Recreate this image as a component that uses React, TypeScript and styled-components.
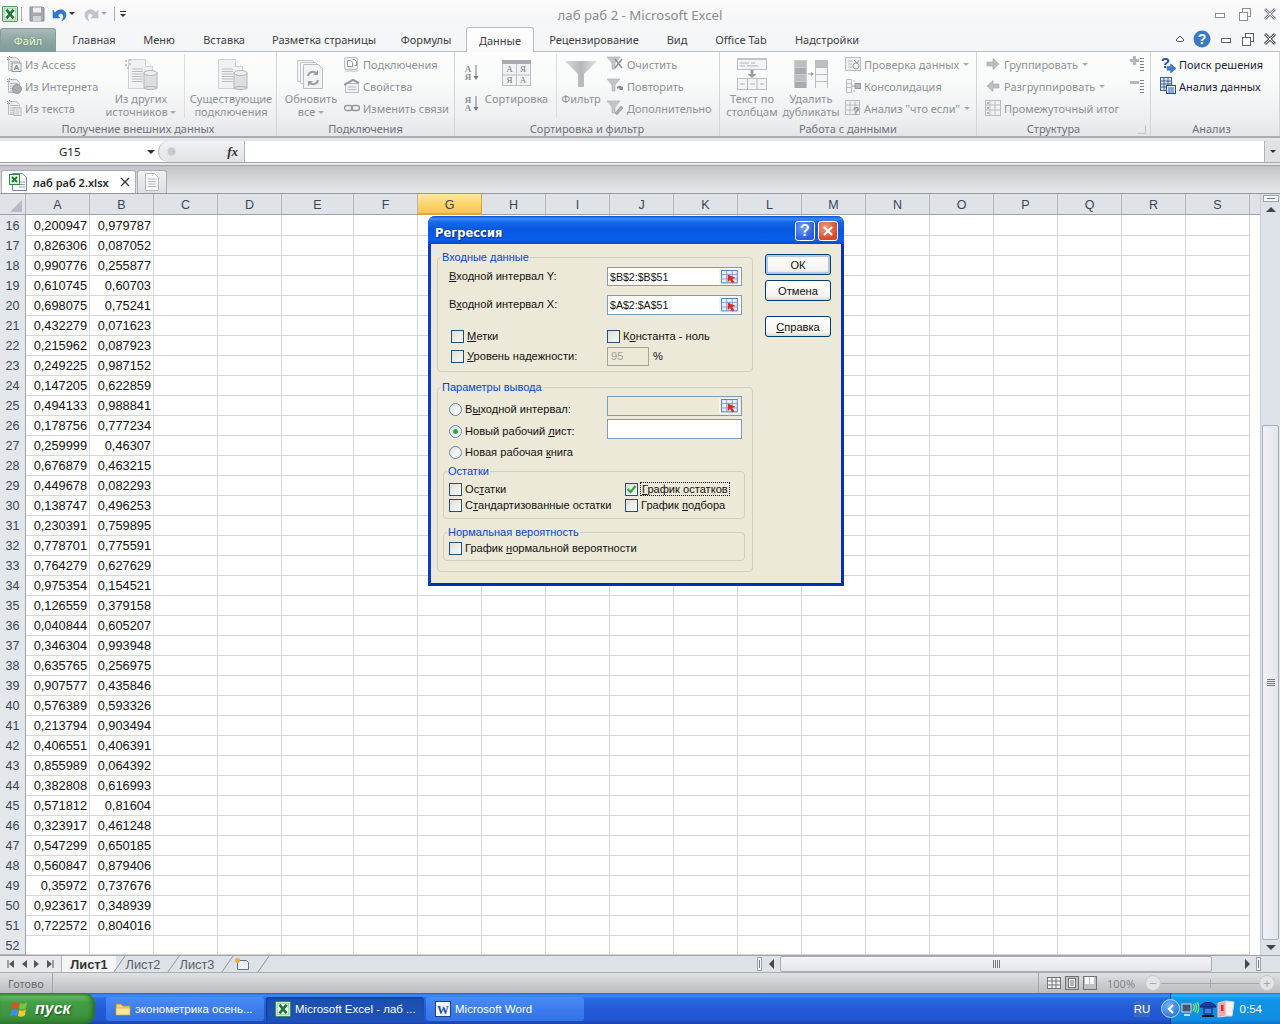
import * as React from 'react'
import styled, { createGlobalStyle } from 'styled-components'

const GlobalStyle = createGlobalStyle`
  html, body { margin: 0; padding: 0; background: #fff; }
  body { font-family: "Noto Sans", "Liberation Sans", sans-serif; }
  * { box-sizing: border-box; }
`

const Page = styled.div`
  position: relative;
  width: 1280px;
  height: 1024px;
  overflow: hidden;
  display: flex;
  flex-direction: column;
`

const Glyph = styled.svg`
  display: block;
  flex: none;
`

/* ---------- title bar ---------- */
const TitleBar = styled.div`
  height: 27px;
  display: grid;
  grid-template-columns: 1fr auto 1fr;
  align-items: center;
  background: linear-gradient(#fbfbfc, #f5f6f8);
`
const Qat = styled.div`
  display: flex;
  align-items: center;
  padding-left: 2px;
`
const QatSep = styled.div<{ $ml: number; $mr: number }>`
  width: 1px;
  height: 14px;
  margin: 0 ${p => p.$mr}px 0 ${p => p.$ml}px;
  background: #a9abae;
`
const QatSlot = styled.div<{ $ml: number }>`
  margin-left: ${p => p.$ml}px;
`
const Caret = styled.span<{ $grey?: boolean; $gap?: number }>`
  display: inline-block;
  vertical-align: 2px;
  width: 0;
  height: 0;
  margin-left: ${p => p.$gap ?? 4}px;
  border-left: 3px solid transparent;
  border-right: 3px solid transparent;
  border-top: 3px solid ${p => (p.$grey ? '#a8abaf' : '#333')};
`
const Title = styled.div`
  padding-top: 2px;
  font-size: 13.2px;
  color: #8a8c90;
`
const WinBtns = styled.div<{ $gap: number }>`
  display: flex;
  justify-content: flex-end;
  align-items: center;
  gap: ${p => p.$gap}px;
  padding-right: 3px;
`

/* ---------- tabs ---------- */
const TabRow = styled.div`
  height: 25px;
  display: flex;
  background: #f5f6f8;
  border-bottom: 1px solid #b9bbbe;
`
const FileTab = styled.div`
  width: 56px;
  height: 24px;
  margin-top: 1px;
  display: flex;
  align-items: center;
  justify-content: center;
  font-size: 11px;
  color: #eef6e4;
  text-shadow: 0 0 3px #5f8a3a;
  background: linear-gradient(#a9bbb9, #8ba5a3 55%, #7d9c98);
  border: 1px solid #8c9a9c;
  border-bottom: none;
  border-radius: 3px 3px 0 0;
`
const Tab = styled.div<{ $w: number; $on?: boolean }>`
  width: ${p => p.$w}px;
  height: ${p => (p.$on ? 25 : 24)}px;
  display: flex;
  align-items: center;
  justify-content: center;
  font-size: 11px;
  color: #3c3f44;
  ${p => p.$on && `
    background: linear-gradient(#fdfdfd, #fbfbfc);
    border: 1px solid #b9bbbe;
    border-bottom: none;
    border-radius: 3px 3px 0 0;
    position: relative;
    z-index: 1;
  `}
`
const TabTools = styled(WinBtns)`
  flex: 1;
`

/* ---------- ribbon ---------- */
const Ribbon = styled.div`
  height: 86px;
  display: flex;
  background: linear-gradient(#fdfdfd 0, #f8f9f9 40%, #eceef0 82%, #e3e5e8 100%);
  border-bottom: 2px solid #a9acb0;
`
const Group = styled.section<{ $w?: number }>`
  position: relative;
  ${p => (p.$w ? `width: ${p.$w}px;` : 'flex: 1;')}
  display: flex;
  flex-direction: column;
  border-right: 1px solid #d3d5d8;
`
const GroupBody = styled.div<{ $pl?: number }>`
  height: 70px;
  padding: 1px 0 0 ${p => p.$pl ?? 0}px;
  display: flex;
`
const GroupLabel = styled.div<{ $pr?: number }>`
  height: 14px;
  padding-right: ${p => p.$pr ?? 0}px;
  text-align: center;
  font-size: 11px;
  line-height: 14px;
  color: #6f7278;
`
const Launcher = styled.div`
  position: absolute;
  right: 4px;
  bottom: 2px;
  width: 9px;
  height: 9px;
  border: 1px solid #c4c6c9;
  border-top-color: transparent;
  border-left-color: transparent;
`
const BigBtn = styled.div<{ $w: number; $ml?: number }>`
  width: ${p => p.$w}px;
  margin-left: ${p => p.$ml ?? 0}px;
  padding-top: 3px;
  display: flex;
  flex-direction: column;
  align-items: center;
  font-size: 11px;
  line-height: 13px;
  color: #8e9197;
  text-align: center;
  white-space: nowrap;
`
const BigIcon = styled.div`
  height: 36px;
  display: flex;
  align-items: center;
  justify-content: center;
`
const SmallCol = styled.div<{ $w?: number; $ml?: number }>`
  ${p => p.$w && `width: ${p.$w}px;`}
  margin-left: ${p => p.$ml ?? 0}px;
  display: flex;
  flex-direction: column;
`
const SmallRow = styled.div<{ $on?: boolean }>`
  height: 22px;
  display: flex;
  align-items: center;
  gap: 3px;
  font-size: 11px;
  color: ${p => (p.$on ? '#1d2733' : '#8e9197')};
  white-space: nowrap;
`
const VSep = styled.div<{ $ml: number; $mr?: number }>`
  width: 1px;
  height: 64px;
  margin: 1px ${p => p.$mr ?? 0}px 0 ${p => p.$ml}px;
  background: #dcdee0;
`
const SortCol = styled.div`
  width: 21px;
  padding-top: 11px;
  display: flex;
  flex-direction: column;
  gap: 13px;
`
const BtnCaret = styled(Caret).attrs({ $grey: true })``
const DetailCol = styled.div`
  margin-left: auto;
  margin-right: 5px;
  padding-top: 3px;
  display: flex;
  flex-direction: column;
  gap: 6px;
`

/* ---------- formula bar ---------- */
const FormulaBar = styled.div`
  height: 27px;
  padding-top: 3px;
  background: #e4e6e9;
`
const FormulaRow = styled.div`
  height: 22px;
  display: flex;
  align-items: stretch;
  border-bottom: 1px solid #a4a7ab;
  background: #fff;
`
const NameBox = styled.div`
  width: 158px;
  position: relative;
  display: flex;
  align-items: center;
  padding-left: 59px;
  font-size: 11.5px;
  color: #222;
`
const NameCaret = styled(Caret)`
  position: absolute;
  right: 3px;
  top: 9px;
  border-left-width: 4px;
  border-right-width: 4px;
  border-top-width: 4px;
`
const FxBox = styled.div`
  width: 87px;
  display: flex;
  align-items: center;
  justify-content: space-between;
  padding: 0 6px 0 8px;
  background: linear-gradient(#f1f2f4, #e1e3e6);
  border-left: 1px solid #b0b3b7;
  border-right: 1px solid #b0b3b7;
  border-radius: 12px 0 0 12px;
`
const Dot = styled.div`
  width: 9px;
  height: 9px;
  border-radius: 50%;
  background: #c6c8cc;
  border: 1px solid #d8dadc;
`
const Fx = styled.span`
  font-family: "Liberation Serif", serif;
  font-style: italic;
  font-weight: bold;
  font-size: 13px;
  color: #333;
`
const FormulaInput = styled.div`
  flex: 1;
`
const FormulaDrop = styled.div`
  width: 16px;
  display: flex;
  align-items: center;
  justify-content: center;
  background: #dfe1e5;
  border-left: 1px solid #b0b3b7;
`

/* ---------- workbook strip ---------- */
const BookStrip = styled.div`
  height: 29px;
  padding-top: 4px;
  display: flex;
  background: linear-gradient(#c2c4c9, #d7d9dc 55%, #e7e8ea);
  border-top: 1px solid #a2a4a8;
  border-bottom: 1px solid #93969b;
`
const BookTab = styled.div`
  width: 135px;
  margin-left: 1px;
  padding: 0 5px 0 7px;
  display: flex;
  align-items: center;
  background: #fff;
  border: 1px solid #a9acb0;
  border-bottom: none;
  border-radius: 3px 3px 0 0;
`
const BookName = styled.span`
  margin-left: 6px;
  flex: 1;
  font-size: 11px;
  font-weight: 600;
  color: #25282c;
  white-space: nowrap;
`
const NewBookTab = styled(BookTab)`
  width: 30px;
  padding: 0;
  justify-content: center;
  background: linear-gradient(#f0f1f2, #dcdee1);
`

/* ---------- sheet ---------- */
const COLS = '26px 64px 64px 64px 64px 72px repeat(14, 64px)'
const HEAD = ['A', 'B', 'C', 'D', 'E', 'F', 'G', 'H', 'I', 'J', 'K', 'L', 'M', 'N', 'O', 'P', 'Q', 'R', 'S']

const SheetArea = styled.div`
  height: 761px;
  display: flex;
`
const Table = styled.div`
  width: 1260px;
  display: flex;
  flex-direction: column;
`
const HeadRow = styled.div`
  height: 21px;
  display: grid;
  grid-template-columns: ${COLS};
  background: #dfe3e8;
  border-bottom: 1px solid #9ea3a9;
`
const Corner = styled.div`
  display: flex;
  align-items: flex-end;
  justify-content: flex-end;
  padding: 0 3px 2px 0;
  border-right: 1px solid #b4b8be;
`
const HeadCell = styled.div<{ $on?: boolean }>`
  padding-top: 2px;
  display: flex;
  align-items: center;
  justify-content: center;
  font-family: "Liberation Sans", sans-serif;
  font-size: 12.5px;
  color: #3b4654;
  border-right: 1px solid #b4b8be;
  ${p => p.$on && `
    background: linear-gradient(#ffe8a6, #fbd469 55%, #f8c654);
    border-bottom: 2px solid #e9a33a;
    border-right-color: #dba53a;
    margin-bottom: -1px;
  `}
`
const Row = styled.div`
  height: 20px;
  display: grid;
  grid-template-columns: ${COLS};
`
const RowHead = styled.div`
  padding-top: 2px;
  display: flex;
  align-items: center;
  justify-content: center;
  font-family: "Liberation Sans", sans-serif;
  font-size: 12.5px;
  color: #3b4654;
  background: #e3e6eb;
  border-right: 1px solid #9ea3a9;
  border-bottom: 1px solid #b4b8be;
`
const Cell = styled.div`
  padding: 1px 2px 0 0;
  font-family: "Liberation Sans", sans-serif;
  font-size: 12.8px;
  line-height: 19px;
  text-align: right;
  color: #111;
  border-right: 1px solid #d6d6d6;
  border-bottom: 1px solid #d6d6d6;
`
const VScroll = styled.div`
  width: 20px;
  display: flex;
  flex-direction: column;
  align-items: center;
  background: #dde1e8;
  border-left: 1px solid #c9cdd4;
`
const SplitV = styled.div`
  width: 16px;
  height: 7px;
  margin-top: 1px;
  background: #f6f7f9;
  border: 1px solid #9ea2a8;
  display: flex;
  align-items: center;
  justify-content: center;
`
const SplitLine = styled.div`
  width: 8px;
  height: 1px;
  background: #777;
`
const ArrowBtn = styled.div`
  height: 15px;
  width: 100%;
  flex: none;
  display: flex;
  align-items: center;
  justify-content: center;
`
const ThumbV = styled.div`
  flex: 1;
  width: 17px;
  margin-top: 208px;
  display: flex;
  align-items: center;
  justify-content: center;
  background: linear-gradient(90deg, #f0f2f5, #e2e5ea);
  border: 1px solid #a9adb4;
  border-radius: 2px;
`
const Up = styled.div`
  width: 0;
  height: 0;
  border-left: 5px solid transparent;
  border-right: 5px solid transparent;
  border-bottom: 5px solid #444;
`
const Down = styled(Up)`
  border-bottom: none;
  border-top: 5px solid #444;
`
const LeftTri = styled.div`
  width: 0;
  height: 0;
  border-top: 5px solid transparent;
  border-bottom: 5px solid transparent;
  border-right: 5px solid #444;
`
const RightTri = styled(LeftTri)`
  border-right: none;
  border-left: 5px solid #444;
`
const GripV = styled.div`
  width: 8px;
  height: 7px;
  background: repeating-linear-gradient(#777 0 1px, transparent 1px 2px);
`
const GripH = styled.div`
  width: 7px;
  height: 8px;
  background: repeating-linear-gradient(90deg, #777 0 1px, transparent 1px 2px);
`

/* ---------- sheet tabs row ---------- */
const SheetBar = styled.div`
  height: 17px;
  display: flex;
  align-items: stretch;
  background: #dde1e8;
  border-top: 1px solid #a0a4aa;
`
const SheetNav = styled.div`
  width: 62px;
  display: flex;
  align-items: center;
  justify-content: space-around;
  padding: 0 4px;
  background: #e8eaee;
  border-right: 1px solid #b0b4ba;
`
const SheetTab = styled.div<{ $on?: boolean; $w: number }>`
  position: relative;
  width: ${p => p.$w}px;
  display: flex;
  align-items: center;
  justify-content: center;
  font-family: "Liberation Sans", sans-serif;
  font-size: 12.8px;
  font-weight: ${p => (p.$on ? 'bold' : 'normal')};
  color: ${p => (p.$on ? '#333' : '#5c6066')};
  ${p => p.$on && 'background: #f4f5f7;'}
  &::after {
    content: '';
    position: absolute;
    right: -4px;
    top: 0;
    bottom: 0;
    width: 1px;
    background: #8f949b;
    transform: skewX(-35deg);
  }
`
const SheetFill = styled.div`
  flex: 1;
`
const HSplit = styled.div`
  width: 5px;
  margin: 1px 0;
  background: #f6f7f9;
  border: 1px solid #9ea2a8;
  display: flex;
  align-items: center;
  justify-content: center;
`
const HSplitLine = styled.div`
  width: 1px;
  height: 8px;
  background: #777;
`
const HArrow = styled.div`
  width: 18px;
  display: flex;
  align-items: center;
  justify-content: center;
`
const ThumbH = styled.div`
  width: 432px;
  display: flex;
  align-items: center;
  justify-content: center;
  background: linear-gradient(#f3f4f7, #e3e6ea);
  border: 1px solid #a9adb4;
  border-radius: 2px;
`
const HTrack = styled.div<{ $w: number }>`
  width: ${p => p.$w}px;
`

/* ---------- status bar ---------- */
const StatusBar = styled.div`
  height: 21px;
  display: flex;
  align-items: stretch;
  font-size: 11px;
  color: #666a70;
  background: linear-gradient(#dfe0e3, #c9cacd 60%, #bcbdc1);
  border-top: 1px solid #a9acb0;
`
const StatusText = styled.div`
  width: 53px;
  padding-left: 8px;
  display: flex;
  align-items: center;
  border-right: 1px solid #a3a5a9;
`
const StatusRight = styled.div`
  margin-left: auto;
  width: 242px;
  padding-left: 8px;
  display: flex;
  align-items: center;
  border-left: 1px solid #a3a5a9;
`
const Zoom = styled.span`
  margin: 0 10px 0 10px;
  font-size: 11px;
  color: #85888d;
`
const ZoomBtn = styled.div`
  width: 16px;
  height: 16px;
  flex: none;
  display: flex;
  align-items: center;
  justify-content: center;
  border-radius: 50%;
  background: #e3e4e6;
  border: 1px solid #c6c8cb;
  font-size: 13px;
  line-height: 1;
  color: #a4a7ab;
`
const ZoomTrack = styled.div`
  position: relative;
  width: 98px;
  height: 1px;
  background: #a4a7ab;
  &::after {
    content: '';
    position: absolute;
    left: 49px;
    top: -4px;
    width: 1px;
    height: 9px;
    background: #a4a7ab;
  }
`

/* ---------- taskbar ---------- */
const Taskbar = styled.div`
  height: 31px;
  display: flex;
  align-items: stretch;
  background: linear-gradient(#2263d6 0, #3d8cf2 8%, #2a6be0 18%, #2259d6 55%, #2157d3 85%, #1a43a8 100%);
`
const StartBtn = styled.div`
  width: 95px;
  display: flex;
  align-items: center;
  gap: 5px;
  padding-left: 10px;
  background: linear-gradient(#378a37 0, #62b462 12%, #44a044 30%, #3b933b 75%, #2f7a2f 100%);
  border-radius: 0 10px 10px 0;
  box-shadow: inset -3px 0 4px #2a6e2a;
`
const StartText = styled.span`
  font-family: "Liberation Sans", sans-serif;
  font-style: italic;
  font-weight: bold;
  font-size: 16px;
  color: #fff;
  text-shadow: 1px 1px 2px #1f4a1f;
`
const TaskBtns = styled.div`
  display: flex;
  gap: 2px;
  margin-left: 11px;
  padding: 4px 0 3px;
`
const TaskBtn = styled.div<{ $on?: boolean }>`
  width: 158px;
  padding-left: 9px;
  display: flex;
  align-items: center;
  gap: 4px;
  font-family: "Liberation Sans", sans-serif;
  font-size: 11.5px;
  color: #fff;
  white-space: nowrap;
  overflow: hidden;
  border-radius: 3px;
  background: ${p => (p.$on ? 'linear-gradient(#1c4eb0, #1e52b7)' : 'linear-gradient(#4a8cf5, #3a7aea 60%, #3473e4)')};
  ${p => p.$on && 'box-shadow: inset 1px 1px 2px #143a8c;'}
`
const Lang = styled.div`
  margin-left: auto;
  align-self: center;
  width: 16px;
  height: 16px;
  margin-right: 20px;
  display: flex;
  align-items: center;
  justify-content: center;
  font-family: "Liberation Sans", sans-serif;
  font-size: 11.5px;
  color: #fff;
  background: #3a69c4;
`
const Tray = styled.div`
  position: relative;
  width: 110px;
  padding-left: 10px;
  display: flex;
  align-items: center;
  background: linear-gradient(#0d7ed4 0, #24b2f4 8%, #1094e6 20%, #0f8fe4 85%, #0d6fc8 100%);
  border-left: 1px solid #0c3f96;
`
const TrayArrow = styled.div`
  position: absolute;
  left: -10px;
  top: 6px;
  width: 19px;
  height: 19px;
  display: flex;
  align-items: center;
  justify-content: center;
  border-radius: 50%;
  background: radial-gradient(circle at 40% 35%, #6cb6f6, #1e63cc);
  border: 1px solid #bcd8f6;
`
const Clock = styled.span`
  margin-left: auto;
  margin-right: 18px;
  font-family: "Liberation Sans", sans-serif;
  font-size: 11.5px;
  color: #fff;
`

/* ---------- dialog ---------- */
const Dialog = styled.div`
  position: absolute;
  left: 428px;
  top: 216px;
  width: 416px;
  height: 370px;
  display: flex;
  flex-direction: column;
  background: #ece9d8;
  border: 3px solid #0a3ccc;
  border-top: none;
  border-bottom-color: #0630b0;
  border-right-color: #0630b0;
  border-radius: 7px 7px 0 0;
  font-family: "Liberation Sans", sans-serif;
  font-size: 11.1px;
  color: #111;
`
const DlgTitle = styled.div`
  height: 28px;
  margin: 0 -3px;
  padding: 2px 6px 0 7px;
  display: flex;
  align-items: center;
  justify-content: space-between;
  background: linear-gradient(#0a4fd6 0, #3d8bf5 10%, #1468ea 22%, #0857e0 50%, #0a5ff0 85%, #0a48c8 100%);
  border-radius: 7px 7px 0 0;
`
const DlgTitleText = styled.span`
  padding-top: 3px;
  font-family: "DejaVu Sans", sans-serif;
  font-size: 11.5px;
  font-weight: bold;
  color: #fff;
  text-shadow: 1px 1px 1px #0a2a80;
`
const DlgBtns = styled.div`
  display: flex;
  gap: 3px;
`
const CapBtn = styled.div<{ $red?: boolean }>`
  width: 20px;
  height: 20px;
  display: flex;
  align-items: center;
  justify-content: center;
  border: 1px solid #fff;
  border-radius: 3px;
  font-size: 16px;
  font-weight: bold;
  color: #fff;
  background: ${p => (p.$red
    ? 'radial-gradient(circle at 35% 30%, #f0a080, #d8482a 70%)'
    : 'radial-gradient(circle at 35% 30%, #6a9cf4, #2a5ce0 70%)')};
`
const DlgBody = styled.div`
  flex: 1;
  padding-left: 6px;
  display: flex;
`
const DlgMain = styled.div`
  width: 316px;
`
const Fieldset = styled.fieldset`
  margin: 6px 0 0;
  padding: 3px 0 5px;
  min-width: 0;
  border: 1px solid #d0cfbe;
  border-radius: 4px;
`
const OutputSet = styled(Fieldset)`
  margin-top: 8px;
  padding: 2px 7px 10px 5px;
`
const SubSet = styled(Fieldset)`
  margin-top: 1px;
  padding: 3px 0 5px 5px;
`
const NormalSet = styled(SubSet)`
  margin-top: 6px;
  padding: 1px 0 4px 5px;
`
const Legend = styled.legend`
  height: 14px;
  margin-left: 3px;
  padding: 0 1px;
  font-size: 11px;
  line-height: 14px;
  color: #0046d5;
`
const InnerLegend = styled(Legend)`
  margin-left: -2px;
`
const FormGrid = styled.div`
  padding-left: 11px;
  display: grid;
  grid-template-columns: 158px 135px;
  grid-template-rows: 28px 31px 20px 20px;
  align-items: start;
`
const CheckGrid = styled.div`
  display: grid;
  grid-template-columns: 176px auto;
  grid-auto-rows: 16px;
  align-items: center;
`
const Line = styled.label`
  display: flex;
  align-items: center;
  gap: 3px;
  white-space: nowrap;
`
const FieldLabel = styled(Line)`
  height: 18px;
`
const FormCheck = styled(Line)<{ $indent?: boolean }>`
  height: 20px;
  margin-left: ${p => (p.$indent ? 2 : 0)}px;
`
const Box = styled.span`
  width: 13px;
  height: 13px;
  flex: none;
  display: flex;
  align-items: center;
  justify-content: center;
  background: linear-gradient(135deg, #dcdcd7, #fbfbf9);
  border: 1px solid #1c5180;
`
const Focused = styled.span`
  outline: 1px dotted #111;
  padding: 0 1px;
`
const Radio = styled.span`
  width: 13px;
  height: 13px;
  flex: none;
  display: flex;
  align-items: center;
  justify-content: center;
  border-radius: 50%;
  background: linear-gradient(135deg, #e2e2dc, #fff);
  border: 1px solid #5f88ae;
`
const RadioDot = styled.span`
  width: 5px;
  height: 5px;
  border-radius: 50%;
  background: #2fa83f;
`
const Field = styled.div<{ $off?: boolean; $h?: number }>`
  height: ${p => p.$h ?? 19}px;
  padding: 0 1px 0 2px;
  display: flex;
  align-items: center;
  justify-content: space-between;
  font-size: 10.6px;
  background: ${p => (p.$off ? '#ece9d8' : '#fff')};
  border: 1px solid #7f9db9;
`
const RefBtn = styled.span`
  width: 21px;
  height: 16px;
  display: flex;
  align-items: center;
  justify-content: center;
  background: #f6f5ef;
  border-radius: 2px;
`
const SmallField = styled.span`
  width: 42px;
  height: 19px;
  padding-left: 3px;
  display: flex;
  align-items: center;
  color: #a0a08f;
  background: #ece9d8;
  border: 1px solid #a3a692;
`
const LevelRow = styled.div`
  height: 20px;
  display: flex;
  align-items: center;
  gap: 4px;
`
const OutGrid = styled.div`
  padding-left: 6px;
  display: grid;
  grid-template-columns: 158px 135px;
  grid-template-rows: 23px 22px 22px;
`
const OptLine = styled(Line)`
  height: 20px;
  align-self: start;
`
const FirstOpt = styled(OptLine)`
  margin-top: 3px;
`
const SecondOpt = styled(OptLine)`
  margin-top: 2px;
`
const ThirdOpt = styled(OptLine)`
  margin-top: 1px;
`
const DlgSide = styled.div`
  margin: 10px 0 0 12px;
  width: 66px;
  display: flex;
  flex-direction: column;
  gap: 5px;
`
const DlgButton = styled.div<{ $def?: boolean; $mt?: number }>`
  height: 21px;
  margin-top: ${p => p.$mt ?? 0}px;
  display: flex;
  align-items: center;
  justify-content: center;
  background: linear-gradient(#fff, #f4f3ee 80%, #dcd8cc);
  border: 1px solid #003c74;
  border-radius: 3px;
  ${p => p.$def && 'box-shadow: inset 0 0 0 2px #b4c8ee;'}
`

/* ---------- drawings ---------- */
const G1 = '#b9bcc0'
const G2 = '#e9eaec'
const G3 = '#96999e'

const S = ({ children, w = 16, h = 16 }: { children?: React.ReactNode; w?: number; h?: number }) => (
  <Glyph width={w} height={h} viewBox={`0 0 ${w} ${h}`}>{children}</Glyph>
)
const Sparks = () => <path d="M1 1h1v1H1zM3 0h1v1H3zM5 1h1v1H5zM1 3h1v1H1zM3 3h1v1H3z" fill={G3} />

const DocLines = ({ x, y, n, w }: { x: number; y: number; n: number; w: number }) => (
  <>
    {Array.from({ length: n }, (_, i) => (
      <path key={i} d={`M${x} ${y + i * 2.5}h${w}`} stroke={G1} strokeWidth="1" />
    ))}
  </>
)
const SmallSheet = ({ children }: { children?: React.ReactNode }) => (
  <S>
    <path d="M2.5 1.5h8l3 3v10h-11z" fill={G2} stroke={G1} />
    <Sparks />
    <DocLines x={4} y={5.5} n={4} w={8} />
    {children}
  </S>
)
const AccessIcon = () => (
  <SmallSheet>
    <rect x="6" y="7" width="9" height="8.5" fill="#f4f4f4" stroke={G3} />
    <text x="10.5" y="14" fontSize="7.5" fontWeight="bold" fontFamily="Liberation Sans" textAnchor="middle" fill="#7c8086">A</text>
  </SmallSheet>
)
const WebIcon = () => (
  <SmallSheet>
    <circle cx="11" cy="11" r="4.5" fill="#a9acb1" stroke={G3} />
  </SmallSheet>
)
const TextIcon = () => (
  <SmallSheet>
    <rect x="8" y="8" width="7" height="7.5" fill="#f2f3f4" stroke={G1} />
    <path d="M9.5 10h4M9.5 12h4M9.5 14h4" stroke={G1} />
  </SmallSheet>
)
const BigDoc = ({ spark }: { spark?: boolean }) => (
  <S w={34} h={32}>
    <path d="M4.5 1.5h17l7 7v22h-24z" fill="#f0f1f2" stroke="#cfd1d4" />
    <path d="M21.5 1.5v7h7" fill="#fff" stroke="#cfd1d4" />
    {spark && <path d="M1 2h2v2H1zM5 1h2v2H5zM1 6h2v2H1zM5 5h2v2H5zM3 9h2v2H3z" fill="#c2c4c8" />}
    <DocLines x={8} y={11} n={6} w={11} />
    <rect x="20" y="15" width="13" height="15" fill="#dcdee0" stroke="#b4b6ba" />
    <ellipse cx="26.5" cy="15" rx="6.5" ry="2.5" fill="#eceeef" stroke="#b4b6ba" />
    <ellipse cx="26.5" cy="30" rx="6.5" ry="1.5" fill="#dcdee0" stroke="#b4b6ba" />
  </S>
)
const RefreshIcon = () => (
  <S w={30} h={32}>
    <path d="M1.5 2.5h15l3 3v18h-18z" fill="#f4f5f6" stroke="#c4c6ca" />
    <path d="M4.5 4.5h15l3 3v18h-18z" fill="#f4f5f6" stroke="#c4c6ca" />
    <path d="M7.5 6.5h15l4 4v20h-19z" fill="#f1f2f3" stroke="#bcbec2" />
    <path d="M12 18a5 5 0 0 1 9-2M22 22a5 5 0 0 1-9 2" fill="none" stroke="#9b9ea3" strokeWidth="2" />
    <path d="M22 12v5h-5zM12 28v-5h5z" fill="#9b9ea3" />
  </S>
)
const ConnIcon = () => (
  <S>
    <rect x="0.5" y="1.5" width="13" height="12" rx="2" fill="#eef0f1" stroke={G1} />
    <path d="M3.5 4.5h3l2 2v4h-5z" fill="#fff" stroke={G3} />
    <path d="M8.5 3.5h2l2 2v4h-2" fill="#fff" stroke={G3} />
    <path d="M1 15h13" stroke={G1} />
  </S>
)
const PropIcon = () => (
  <S>
    <rect x="1.5" y="5.5" width="13" height="9" fill="#eef0f1" stroke={G1} />
    <path d="M0 7l9-5 6 3" fill="none" stroke={G3} strokeWidth="2" />
    <path d="M4 9h8M4 11.5h8" stroke={G1} />
  </S>
)
const LinkIcon = () => (
  <S>
    <rect x="0.5" y="5.5" width="8" height="5" rx="2.5" fill="none" stroke={G3} strokeWidth="1.4" />
    <rect x="7.5" y="5.5" width="8" height="5" rx="2.5" fill="none" stroke={G3} strokeWidth="1.4" />
  </S>
)
const SortSmall = ({ top, bottom }: { top: string; bottom: string }) => (
  <S w={18} h={18}>
    <text x="5" y="8" fontSize="9" fontFamily="Liberation Serif" fontWeight="bold" textAnchor="middle" fill="#8d9096">{top}</text>
    <text x="5" y="16" fontSize="9" fontFamily="Liberation Serif" fontWeight="bold" textAnchor="middle" fill="#8d9096">{bottom}</text>
    <path d="M13 1v13" stroke="#777a80" />
    <path d="M10.5 12h5L13 16z" fill="#777a80" />
  </S>
)
const SortBig = () => (
  <S w={32} h={28}>
    <rect x="1.5" y="0.5" width="28" height="25" fill="#f1f2f3" stroke="#bcbec2" />
    <rect x="1" y="0" width="29" height="4" fill="#a8abaf" />
    <path d="M15.5 4v21M2 15h27" stroke="#bcbec2" />
    {[['8.5', '12', 'А'], ['22', '12', 'Я'], ['8.5', '23', 'Я'], ['22', '23', 'А']].map(([x, y, t]) => (
      <text key={x + y} x={x} y={y} fontSize="9" fontFamily="Liberation Serif" textAnchor="middle" fill="#777a80">{t}</text>
    ))}
  </S>
)
const Funnel = () => (
  <S w={32} h={28}>
    <defs>
      <linearGradient id="fg" x1="0" x2="1">
        <stop offset="0" stopColor="#d8dadc" />
        <stop offset="0.5" stopColor="#b5b7bb" />
        <stop offset="1" stopColor="#e2e3e5" />
      </linearGradient>
    </defs>
    <path d="M0 1h32L19 14v13h-6V14z" fill="url(#fg)" />
  </S>
)
const SmallFunnel = ({ children }: { children?: React.ReactNode }) => (
  <S w={18} h={16}>
    <path d="M1 1h13L9 7v6H6V7z" fill="#c3c5c9" stroke="#a9acb0" strokeWidth="0.6" />
    {children}
  </S>
)
const TextColIcon = () => (
  <S w={32} h={32}>
    <rect x="1.5" y="0.5" width="29" height="11" fill="#f3f4f5" stroke="#bcbec2" />
    <rect x="1" y="0" width="30" height="2" fill="#c2c4c8" />
    <path d="M4 5h9M15 5h4M4 8h5M11 8h11" stroke="#b0b3b7" />
    <path d="M14.5 12h3v4h3L16 20l-4.500-4h3z" fill="#9a9da2" />
    <rect x="1.5" y="20.5" width="29" height="11" fill="#f3f4f5" stroke="#bcbec2" />
    <path d="M11.5 21v10M21 21v10M4 26h5M14 26h5M24 26h4" stroke="#b0b3b7" />
  </S>
)
const DupIcon = () => (
  <S w={34} h={28}>
    {[0, 1, 2, 3].map(i => (
      <React.Fragment key={i}>
        <rect x="0.5" y={0.5 + i * 7} width="12" height="7" fill={i % 2 ? '#a8abaf' : '#bcbec2'} stroke="#c9cbce" />
        <rect x="21.5" y={0.5 + i * 7} width="12" height="7" fill={i === 0 ? '#bcbec2' : '#f6f6f7'} stroke="#b9bcc0" />
      </React.Fragment>
    ))}
    <path d="M14 14h4" stroke="#999" />
    <path d="M17 12l3 2-3 2z" fill="#999" />
  </S>
)
const CheckDocIcon = () => (
  <S>
    <rect x="0.5" y="1.5" width="15" height="13" fill="#eef0f1" stroke={G1} />
    <path d="M3 5h5M3 8h4M3 11h4" stroke={G1} />
    <circle cx="11" cy="10" r="3" fill="none" stroke={G3} />
    <path d="M9 4l3 3 2-3" fill="none" stroke={G3} />
  </S>
)
const ConsIcon = () => (
  <S>
    <path d="M1.5 1.5h5v4h-5zM1.5 5.5h5v4h-5zM1.5 9.5h5v5h-5z" fill="#f2f3f4" stroke={G1} />
    <path d="M7 8h3" stroke={G3} />
    <rect x="10" y="5.5" width="5.5" height="5" fill="#b5b7bb" stroke={G3} />
    <path d="M8 3h2M8 13h2" stroke={G1} />
  </S>
)
const TableGrid = ({ children }: { children?: React.ReactNode }) => (
  <S>
    <rect x="0.5" y="0.5" width="14" height="14" fill="#f1f2f3" stroke={G1} />
    <path d="M5 1v13M10 1v13M1 5h13M1 10h13" stroke={G1} />
    {children}
  </S>
)
const WhatIfIcon = () => (
  <TableGrid>
    <text x="11" y="15" fontSize="11" fontWeight="bold" fontFamily="Liberation Sans" textAnchor="middle" fill="#8d9096">?</text>
  </TableGrid>
)
const ArrowRightIcon = () => (
  <S>
    <path d="M2 6h6V2.5l6 5.500-6 5.500V10H2z" fill="#bcbec2" stroke="#a2a5aa" strokeWidth="0.6" />
  </S>
)
const ArrowLeftIcon = () => (
  <S>
    <path d="M14 6H8V2.5L2 8l6 5.500V10h6z" fill="#bcbec2" stroke="#a2a5aa" strokeWidth="0.6" />
  </S>
)
const SubtotalIcon = () => (
  <S>
    <rect x="0.5" y="0.5" width="15" height="15" fill="#f1f2f3" stroke={G1} />
    <path d="M5 1v14M10 1v14M1 5h14M1 10h14" stroke={G1} />
    <path d="M2 3h2M3 2v2M2 8h2M3 7v2M2 13h2M3 12v2" stroke={G3} />
  </S>
)
const OutlineIcon = ({ plus }: { plus?: boolean }) => (
  <S w={16} h={16}>
    <path d="M1 3h9v3H1z" fill="#b5b7bb" />
    {plus && <path d="M4 0h3v9H4z" fill="#b5b7bb" />}
    <path d="M11 2.500h4M11 5.500h4M11 8.500h4M11 11.500h4M11 14.500h4" stroke="#7f8287" />
  </S>
)
const SolverIcon = () => (
  <Glyph width={16} height={18} viewBox="0 0 18 20">
    <text x="6" y="14" fontSize="17" fontWeight="bold" fontFamily="Liberation Sans" textAnchor="middle" fill="#1f4fa8">?</text>
    <path d="M8 13h4v-3l6 5-6 5v-3H8z" fill="#3d7fd6" stroke="#1f4fa8" strokeWidth="0.6" />
  </Glyph>
)
const AnalysisIcon = () => (
  <S w={16} h={18}>
    <rect x="0.5" y="0.5" width="11" height="13" fill="#dfe6f2" stroke="#44608f" />
    <path d="M4 1v12M8 1v12M1 4h10M1 7h10M1 10h10" stroke="#44608f" />
    <rect x="6.5" y="8.5" width="9" height="8" fill="#fff" stroke="#1f4fa8" />
    <path d="M8 11h6M8 13h6M8 15h6" stroke="#1f4fa8" />
  </S>
)
const ExcelBadge = ({ size = 16 }: { size?: number }) => (
  <Glyph width={size} height={size} viewBox="0 0 18 18">
    <rect x="0.5" y="0.5" width="17" height="17" rx="1.5" fill="#dff0d8" stroke="#2e8b45" />
    <rect x="2.5" y="2.5" width="13" height="13" fill="#f6fbf3" stroke="#8cc79a" />
    <path d="M5 4l8 10M13 4L5 14" stroke="#1b7a33" strokeWidth="3" />
  </Glyph>
)
const SaveIcon = () => (
  <S>
    <path d="M1 1h13l1 1v13H1z" fill="#a5a8ac" stroke="#8a8d92" />
    <rect x="4" y="1.5" width="8" height="5" fill="#eceef0" />
    <rect x="4" y="10" width="8" height="5" fill="#d2d4d7" />
  </S>
)
const UndoIcon = ({ grey }: { grey?: boolean }) => (
  <S>
    <g transform={grey ? 'translate(16 0) scale(-1 1)' : undefined}>
      <path d="M3 7c3-5 11-4 11 2 0 3-2 5-4 6 1-2 2-4 1-6-1-2-4-2-5 1l2 2H1V4z" fill={grey ? '#c2c5c8' : '#2f79d2'} stroke={grey ? '#b0b3b7' : '#1f58a8'} strokeWidth="0.5" />
    </g>
  </S>
)
const CustomizeIcon = () => (
  <S w={8} h={8}>
    <path d="M1 1.500h6" stroke="#333" />
    <path d="M1 4h6L4 7z" fill="#333" />
  </S>
)
const ChevronUp = () => (
  <S w={10} h={10}><path d="M1 6l4-4 4 4-1.500 1.500h-5z" fill="#fff" stroke="#555" /></S>
)
const MinBtn = ({ c = '#5d6066' }: { c?: string }) => (
  <S w={14} h={12}><rect x="2.5" y="5.5" width="9" height="4" fill="#fff" stroke={c} /></S>
)
const RestoreBtn = ({ c = '#5d6066' }: { c?: string }) => (
  <S w={14} h={14}>
    <rect x="4.5" y="1.5" width="8" height="8" fill="#fff" stroke={c} />
    <rect x="1.5" y="5.5" width="8" height="8" fill="#fff" stroke={c} />
  </S>
)
const CloseBtn = ({ c = '#5d6066' }: { c?: string }) => (
  <S w={14} h={14}>
    <path d="M2 2l10 10M12 2L2 12" stroke={c} strokeWidth="3" />
    <path d="M2.5 2.5l9 9M11.5 2.5l-9 9" stroke="#fff" />
  </S>
)
const HelpBall = () => (
  <S w={18} h={18}>
    <circle cx="9" cy="9" r="8.5" fill="#3b78c8" />
    <text x="9" y="14" fontSize="14" fontWeight="bold" fontFamily="Liberation Sans" textAnchor="middle" fill="#fff">?</text>
  </S>
)
const BookIcon = () => (
  <S w={18} h={18}>
    <path d="M3.5 0.5h10l4 4v13h-14z" fill="#fff" stroke="#6d86a8" />
    <path d="M10 9h6M10 11.5h6M10 14h6" stroke="#7e9cc4" />
    <rect x="0.5" y="1.5" width="10" height="10" fill="#e1f1dc" stroke="#2e8b45" />
    <path d="M3 4l5 5M8 4L3 9" stroke="#1b7a33" strokeWidth="1.8" />
  </S>
)
const NewDocIcon = () => (
  <S w={14} h={18}>
    <path d="M0.5 0.5h9l4 4v13h-13z" fill="#fafafa" stroke="#b5b7bb" />
    <path d="M3 6h8M3 8.5h8M3 11h8M3 13.5h8" stroke="#b5b7bb" />
  </S>
)
const NavIcon = ({ dir, edge }: { dir: 'l' | 'r'; edge?: boolean }) => (
  <S w={8} h={10}>
    <path d={dir === 'l' ? 'M7 1v8L2 5z' : 'M1 1v8l5-4z'} fill="#555" />
    {edge && <path d={dir === 'l' ? 'M1 1v8' : 'M7 1v8'} stroke="#555" />}
  </S>
)
const AddSheetIcon = () => (
  <S w={16} h={14}>
    <path d="M3.5 3.5h9l2 2v7h-11z" fill="#eef2f7" stroke="#5f6f84" />
    <circle cx="3.5" cy="3.5" r="2.5" fill="#f2a93b" />
  </S>
)
const ViewNormal = () => (
  <S w={14} h={14}>
    <rect x="0.5" y="1.5" width="13" height="11" fill="#f4f4f4" stroke="#70737a" />
    <path d="M5 2v10M9 2v10M1 5h12M1 9h12" stroke="#70737a" />
  </S>
)
const ViewPage = () => (
  <S w={14} h={14}>
    <rect x="0.5" y="0.5" width="13" height="13" fill="#bfc0c3" stroke="#70737a" />
    <rect x="3.5" y="2.5" width="7" height="9" fill="#f4f4f4" stroke="#70737a" />
    <path d="M5 5h4M5 7h4M5 9h4" stroke="#70737a" />
  </S>
)
const ViewBreak = () => (
  <S w={14} h={14}>
    <rect x="0.5" y="0.5" width="13" height="13" fill="#bfc0c3" stroke="#70737a" />
    <rect x="2" y="1" width="4" height="7" fill="#fafafa" />
    <rect x="7" y="1" width="4" height="7" fill="#fafafa" />
  </S>
)
const Flag = () => (
  <S w={20} h={20}>
    <path d="M2 5c2-2 4-2 7-1l-1 6c-3-1-5-1-7 1z" fill="#e2502a" />
    <path d="M10 4c3 1 5 1 7-1l-1 6c-2 2-5 2-7 1z" fill="#7cc242" />
    <path d="M1 12c2-2 4-2 7-1l-1 6c-3-1-5-1-7 1z" fill="#3f8cf0" />
    <path d="M9 11c3 1 5 1 7-1l-1 6c-2 2-5 2-7 1z" fill="#f8c82c" />
  </S>
)
const FolderIcon = () => (
  <S>
    <path d="M1 3h5l2 2h7v9H1z" fill="#f5d574" stroke="#b58f2f" />
    <path d="M1 7h14v7H1z" fill="#fbe69a" stroke="#b58f2f" strokeWidth="0.5" />
  </S>
)
const WordIcon = () => (
  <S>
    <rect x="0.5" y="0.5" width="15" height="15" fill="#f2f6fd" stroke="#1e3f8f" />
    <text x="8" y="13" fontSize="12" fontWeight="bold" fontFamily="Liberation Serif" textAnchor="middle" fill="#1e4fb0">W</text>
  </S>
)
const NetIcon = () => (
  <S w={18} h={16}>
    <rect x="1" y="3" width="9" height="8" fill="#48556a" stroke="#cfd8e6" />
    <path d="M3 13h6v2H3z" fill="#cfd8e6" />
    <path d="M12 3c1.500 2 1.500 5 0 7M14 2c2 3 2 6 0 9M16 1c2.500 3.500 2.500 7.500 0 11" fill="none" stroke="#8ef04a" strokeWidth="1.2" />
  </S>
)
const UmbrellaIcon = () => (
  <S w={18} h={18}>
    <path d="M1 7c2-6 14-6 16 0z" fill="#1a3ea8" stroke="#0b1f66" />
    <rect x="5" y="8" width="8" height="6" fill="#3f7fe8" stroke="#0b1f66" />
    <path d="M3 16h12" stroke="#111" strokeWidth="2" />
  </S>
)
const ShieldIcon = () => (
  <S w={18} h={18}>
    <path d="M1 3l8-2v15l-8 1z" fill="#f4a4a4" stroke="#ddd" />
    <path d="M9 1l8 1-2 14-6 0z" fill="#f7f0f0" stroke="#ddd" />
    <rect x="4" y="5" width="2.500" height="6" fill="#d83030" />
  </S>
)
const RefGlyph = () => (
  <Glyph width={18} height={14} viewBox="0 0 16 12.500">
    <rect x="0.5" y="0.5" width="14" height="11" fill="#e8eefa" stroke="#4d72b8" strokeWidth="0.8" />
    <path d="M1 4h13M1 8h13M5 1v10M10 1v10" stroke="#7f9bd0" strokeWidth="0.8" />
    <path d="M6 4l7 3-3 1 2 3-2 1-2-3-2 2z" fill="#d8321e" />
  </Glyph>
)
const Tick = () => (
  <S w={11} h={11}><path d="M1.500 5l3 3 5-6" fill="none" stroke="#2fa83f" strokeWidth="2.200" /></S>
)

const DATA: [string, string][] = [
  ['0,200947', '0,979787'], ['0,826306', '0,087052'], ['0,990776', '0,255877'], ['0,610745', '0,60703'],
  ['0,698075', '0,75241'], ['0,432279', '0,071623'], ['0,215962', '0,087923'], ['0,249225', '0,987152'],
  ['0,147205', '0,622859'], ['0,494133', '0,988841'], ['0,178756', '0,777234'], ['0,259999', '0,46307'],
  ['0,676879', '0,463215'], ['0,449678', '0,082293'], ['0,138747', '0,496253'], ['0,230391', '0,759895'],
  ['0,778701', '0,775591'], ['0,764279', '0,627629'], ['0,975354', '0,154521'], ['0,126559', '0,379158'],
  ['0,040844', '0,605207'], ['0,346304', '0,993948'], ['0,635765', '0,256975'], ['0,907577', '0,435846'],
  ['0,576389', '0,593326'], ['0,213794', '0,903494'], ['0,406551', '0,406391'], ['0,855989', '0,064392'],
  ['0,382808', '0,616993'], ['0,571812', '0,81604'], ['0,323917', '0,461248'], ['0,547299', '0,650185'],
  ['0,560847', '0,879406'], ['0,35972', '0,737676'], ['0,923617', '0,348939'], ['0,722572', '0,804016'],
  ['', ''],
]

const TABS: [string, number][] = [
  ['Главная', 76], ['Меню', 54], ['Вставка', 76], ['Разметка страницы', 124], ['Формулы', 80],
  ['Данные', 68], ['Рецензирование', 120], ['Вид', 46], ['Office Tab', 82], ['Надстройки', 90],
]

const App: React.FC = () => (
  <Page>
    <GlobalStyle />

    <TitleBar>
      <Qat>
        <ExcelBadge />
        <QatSep $ml={3} $mr={7} />
        <SaveIcon />
        <QatSlot $ml={7}><UndoIcon /></QatSlot>
        <Caret $gap={1} />
        <QatSlot $ml={8}><UndoIcon grey /></QatSlot>
        <Caret $grey $gap={2} />
        <QatSep $ml={7} $mr={4} />
        <CustomizeIcon />
      </Qat>
      <Title>лаб раб 2 - Microsoft Excel</Title>
      <WinBtns $gap={11}>
        <MinBtn c="#8a8d92" />
        <RestoreBtn c="#8a8d92" />
        <CloseBtn c="#8a8d92" />
      </WinBtns>
    </TitleBar>

    <TabRow>
      <FileTab>Файл</FileTab>
      {TABS.map(([name, w]) => (
        <Tab key={name} $w={w} $on={name === 'Данные'}>{name}</Tab>
      ))}
      <TabTools $gap={8}>
        <ChevronUp />
        <HelpBall />
        <MinBtn />
        <RestoreBtn />
        <CloseBtn />
      </TabTools>
    </TabRow>

    <Ribbon>
      <Group $w={277}>
        <GroupBody $pl={6}>
          <SmallCol $w={97}>
            <SmallRow><AccessIcon />Из Access</SmallRow>
            <SmallRow><WebIcon />Из Интернета</SmallRow>
            <SmallRow><TextIcon />Из текста</SmallRow>
          </SmallCol>
          <BigBtn $w={76}>
            <BigIcon><BigDoc spark /></BigIcon>
            <span>Из других<br />источников <BtnCaret $gap={0} /></span>
          </BigBtn>
          <VSep $ml={5} $mr={1} />
          <BigBtn $w={90}>
            <BigIcon><BigDoc /></BigIcon>
            <span>Существующие<br />подключения</span>
          </BigBtn>
        </GroupBody>
        <GroupLabel>Получение внешних данных</GroupLabel>
      </Group>

      <Group $w={178}>
        <GroupBody $pl={7}>
          <BigBtn $w={54}>
            <BigIcon><RefreshIcon /></BigIcon>
            <span>Обновить<br />все <BtnCaret $gap={0} /></span>
          </BigBtn>
          <SmallCol $ml={6}>
            <SmallRow><ConnIcon />Подключения</SmallRow>
            <SmallRow><PropIcon />Свойства</SmallRow>
            <SmallRow><LinkIcon />Изменить связи</SmallRow>
          </SmallCol>
        </GroupBody>
        <GroupLabel>Подключения</GroupLabel>
      </Group>

      <Group $w={265}>
        <GroupBody $pl={8}>
          <SortCol>
            <SortSmall top="А" bottom="Я" />
            <SortSmall top="Я" bottom="А" />
          </SortCol>
          <BigBtn $w={65}>
            <BigIcon><SortBig /></BigIcon>
            Сортировка
          </BigBtn>
          <VSep $ml={7} $mr={4} />
          <BigBtn $w={40}>
            <BigIcon><Funnel /></BigIcon>
            Фильтр
          </BigBtn>
          <SmallCol $ml={5}>
            <SmallRow>
              <SmallFunnel><path d="M9 3l7 9M16 3l-7 9" stroke="#8b8e93" strokeWidth="1.6" /></SmallFunnel>Очистить
            </SmallRow>
            <SmallRow>
              <SmallFunnel><path d="M11 9a3 3 0 0 1 5 0l1-1v4h-4l1-1a2 2 0 0 0-3 0z" fill="#8b8e93" /></SmallFunnel>Повторить
            </SmallRow>
            <SmallRow>
              <SmallFunnel><path d="M9 13l6-7 2 2-6 7z" fill="#a9acb0" stroke="#8b8e93" strokeWidth="0.5" /></SmallFunnel>Дополнительно
            </SmallRow>
          </SmallCol>
        </GroupBody>
        <GroupLabel>Сортировка и фильтр</GroupLabel>
      </Group>

      <Group $w={257}>
        <GroupBody $pl={2}>
          <BigBtn $w={60}>
            <BigIcon><TextColIcon /></BigIcon>
            <span>Текст по<br />столбцам</span>
          </BigBtn>
          <BigBtn $w={58}>
            <BigIcon><DupIcon /></BigIcon>
            <span>Удалить<br />дубликаты</span>
          </BigBtn>
          <SmallCol $ml={5}>
            <SmallRow><CheckDocIcon />Проверка данных <BtnCaret $gap={1} /></SmallRow>
            <SmallRow><ConsIcon />Консолидация</SmallRow>
            <SmallRow><WhatIfIcon />Анализ "что если" <BtnCaret $gap={1} /></SmallRow>
          </SmallCol>
        </GroupBody>
        <GroupLabel>Работа с данными</GroupLabel>
      </Group>

      <Group $w={174}>
        <GroupBody $pl={8}>
          <SmallCol>
            <SmallRow><ArrowRightIcon />Группировать <BtnCaret $gap={1} /></SmallRow>
            <SmallRow><ArrowLeftIcon />Разгруппировать <BtnCaret $gap={1} /></SmallRow>
            <SmallRow><SubtotalIcon />Промежуточный итог</SmallRow>
          </SmallCol>
          <DetailCol>
            <OutlineIcon plus />
            <OutlineIcon />
          </DetailCol>
        </GroupBody>
        <GroupLabel $pr={20}>Структура</GroupLabel>
        <Launcher />
      </Group>

      <Group>
        <GroupBody $pl={9}>
          <SmallCol>
            <SmallRow $on><SolverIcon />Поиск решения</SmallRow>
            <SmallRow $on><AnalysisIcon />Анализ данных</SmallRow>
          </SmallCol>
        </GroupBody>
        <GroupLabel $pr={7}>Анализ</GroupLabel>
      </Group>
    </Ribbon>

    <FormulaBar>
      <FormulaRow>
        <NameBox>G15<NameCaret /></NameBox>
        <FxBox><Dot /><Fx>fx</Fx></FxBox>
        <FormulaInput />
        <FormulaDrop><Caret $gap={0} /></FormulaDrop>
      </FormulaRow>
    </FormulaBar>

    <BookStrip>
      <BookTab>
        <BookIcon />
        <BookName>лаб раб 2.xlsx</BookName>
        <S w={10} h={10}><path d="M1 1l8 8M9 1L1 9" stroke="#333" strokeWidth="1.2" /></S>
      </BookTab>
      <NewBookTab><NewDocIcon /></NewBookTab>
    </BookStrip>

    <SheetArea>
      <Table>
        <HeadRow>
          <Corner><S w={12} h={12}><path d="M12 0v12H0z" fill="#b7bbc1" /></S></Corner>
          {HEAD.map(c => <HeadCell key={c} $on={c === 'G'}>{c}</HeadCell>)}
        </HeadRow>
        {DATA.map(([a, b], i) => (
          <Row key={i}>
            <RowHead>{i + 16}</RowHead>
            <Cell>{a}</Cell>
            <Cell>{b}</Cell>
            {HEAD.slice(2).map(c => <Cell key={c} />)}
          </Row>
        ))}
      </Table>
      <VScroll>
        <SplitV><SplitLine /></SplitV>
        <ArrowBtn><Up /></ArrowBtn>
        <ThumbV><GripV /></ThumbV>
        <ArrowBtn><Down /></ArrowBtn>
      </VScroll>
    </SheetArea>

    <SheetBar>
      <SheetNav>
        <NavIcon dir="l" edge />
        <NavIcon dir="l" />
        <NavIcon dir="r" />
        <NavIcon dir="r" edge />
      </SheetNav>
      <SheetTab $on $w={54}>Лист1</SheetTab>
      <SheetTab $w={54}>Лист2</SheetTab>
      <SheetTab $w={54}>Лист3</SheetTab>
      <SheetTab $w={36}><AddSheetIcon /></SheetTab>
      <SheetFill />
      <HSplit><HSplitLine /></HSplit>
      <HArrow><LeftTri /></HArrow>
      <ThumbH><GripH /></ThumbH>
      <HTrack $w={26} />
      <HArrow><RightTri /></HArrow>
      <HSplit><HSplitLine /></HSplit>
      <HTrack $w={19} />
    </SheetBar>

    <StatusBar>
      <StatusText>Готово</StatusText>
      <StatusRight>
        <ViewNormal />
        <S w={4} h={4} />
        <ViewPage />
        <S w={4} h={4} />
        <ViewBreak />
        <Zoom>100%</Zoom>
        <ZoomBtn>−</ZoomBtn>
        <ZoomTrack />
        <ZoomBtn>+</ZoomBtn>
      </StatusRight>
    </StatusBar>

    <Taskbar>
      <StartBtn><Flag /><StartText>пуск</StartText></StartBtn>
      <TaskBtns>
        <TaskBtn><FolderIcon />эконометрика осень...</TaskBtn>
        <TaskBtn $on><ExcelBadge />Microsoft Excel - лаб ...</TaskBtn>
        <TaskBtn><WordIcon />Microsoft Word</TaskBtn>
      </TaskBtns>
      <Lang>RU</Lang>
      <Tray>
        <TrayArrow>
          <S w={10} h={10}><path d="M7 1L3 5l4 4" fill="none" stroke="#fff" strokeWidth="2.200" /></S>
        </TrayArrow>
        <NetIcon />
        <UmbrellaIcon />
        <ShieldIcon />
        <Clock>0:54</Clock>
      </Tray>
    </Taskbar>

    <Dialog>
      <DlgTitle>
        <DlgTitleText>Регрессия</DlgTitleText>
        <DlgBtns>
          <CapBtn>?</CapBtn>
          <CapBtn $red><S w={12} h={12}><path d="M2 2l8 8M10 2l-8 8" stroke="#fff" strokeWidth="2" /></S></CapBtn>
        </DlgBtns>
      </DlgTitle>
      <DlgBody>
        <DlgMain>
          <Fieldset>
            <Legend>Входные данные</Legend>
            <FormGrid>
              <FieldLabel><span><u>В</u>ходной интервал Y:</span></FieldLabel>
              <Field>$B$2:$B$51<RefBtn><RefGlyph /></RefBtn></Field>
              <FieldLabel><span>В<u>х</u>одной интервал X:</span></FieldLabel>
              <Field $h={20}>$A$2:$A$51<RefBtn><RefGlyph /></RefBtn></Field>
              <FormCheck $indent><Box /><span><u>М</u>етки</span></FormCheck>
              <FormCheck><Box /><span>К<u>о</u>нстанта - ноль</span></FormCheck>
              <FormCheck $indent><Box /><span><u>У</u>ровень надежности:</span></FormCheck>
              <LevelRow><SmallField>95</SmallField>%</LevelRow>
            </FormGrid>
          </Fieldset>

          <OutputSet>
            <InnerLegend>Параметры вывода</InnerLegend>
            <OutGrid>
              <FirstOpt><Radio /><span>В<u>ы</u>ходной интервал:</span></FirstOpt>
              <Field $off $h={20}><span /><RefBtn><RefGlyph /></RefBtn></Field>
              <SecondOpt><Radio><RadioDot /></Radio><span>Новый рабочий <u>л</u>ист:</span></SecondOpt>
              <Field $h={20} />
              <ThirdOpt><Radio /><span>Новая рабочая <u>к</u>нига</span></ThirdOpt>
            </OutGrid>
            <SubSet>
              <InnerLegend>Остатки</InnerLegend>
              <CheckGrid>
                <Line><Box /><span>Ос<u>т</u>атки</span></Line>
                <Line><Box><Tick /></Box><Focused><u>Г</u>рафик остатков</Focused></Line>
                <Line><Box /><span>С<u>т</u>андартизованные остатки</span></Line>
                <Line><Box /><span>График <u>п</u>одбора</span></Line>
              </CheckGrid>
            </SubSet>
            <NormalSet>
              <InnerLegend>Нормальная вероятность</InnerLegend>
              <CheckGrid>
                <Line><Box /><span>График <u>н</u>ормальной вероятности</span></Line>
              </CheckGrid>
            </NormalSet>
          </OutputSet>
        </DlgMain>
        <DlgSide>
          <DlgButton $def>ОК</DlgButton>
          <DlgButton>Отмена</DlgButton>
          <DlgButton $mt={10}><span><u>С</u>правка</span></DlgButton>
        </DlgSide>
      </DlgBody>
    </Dialog>
  </Page>
)

export default App
